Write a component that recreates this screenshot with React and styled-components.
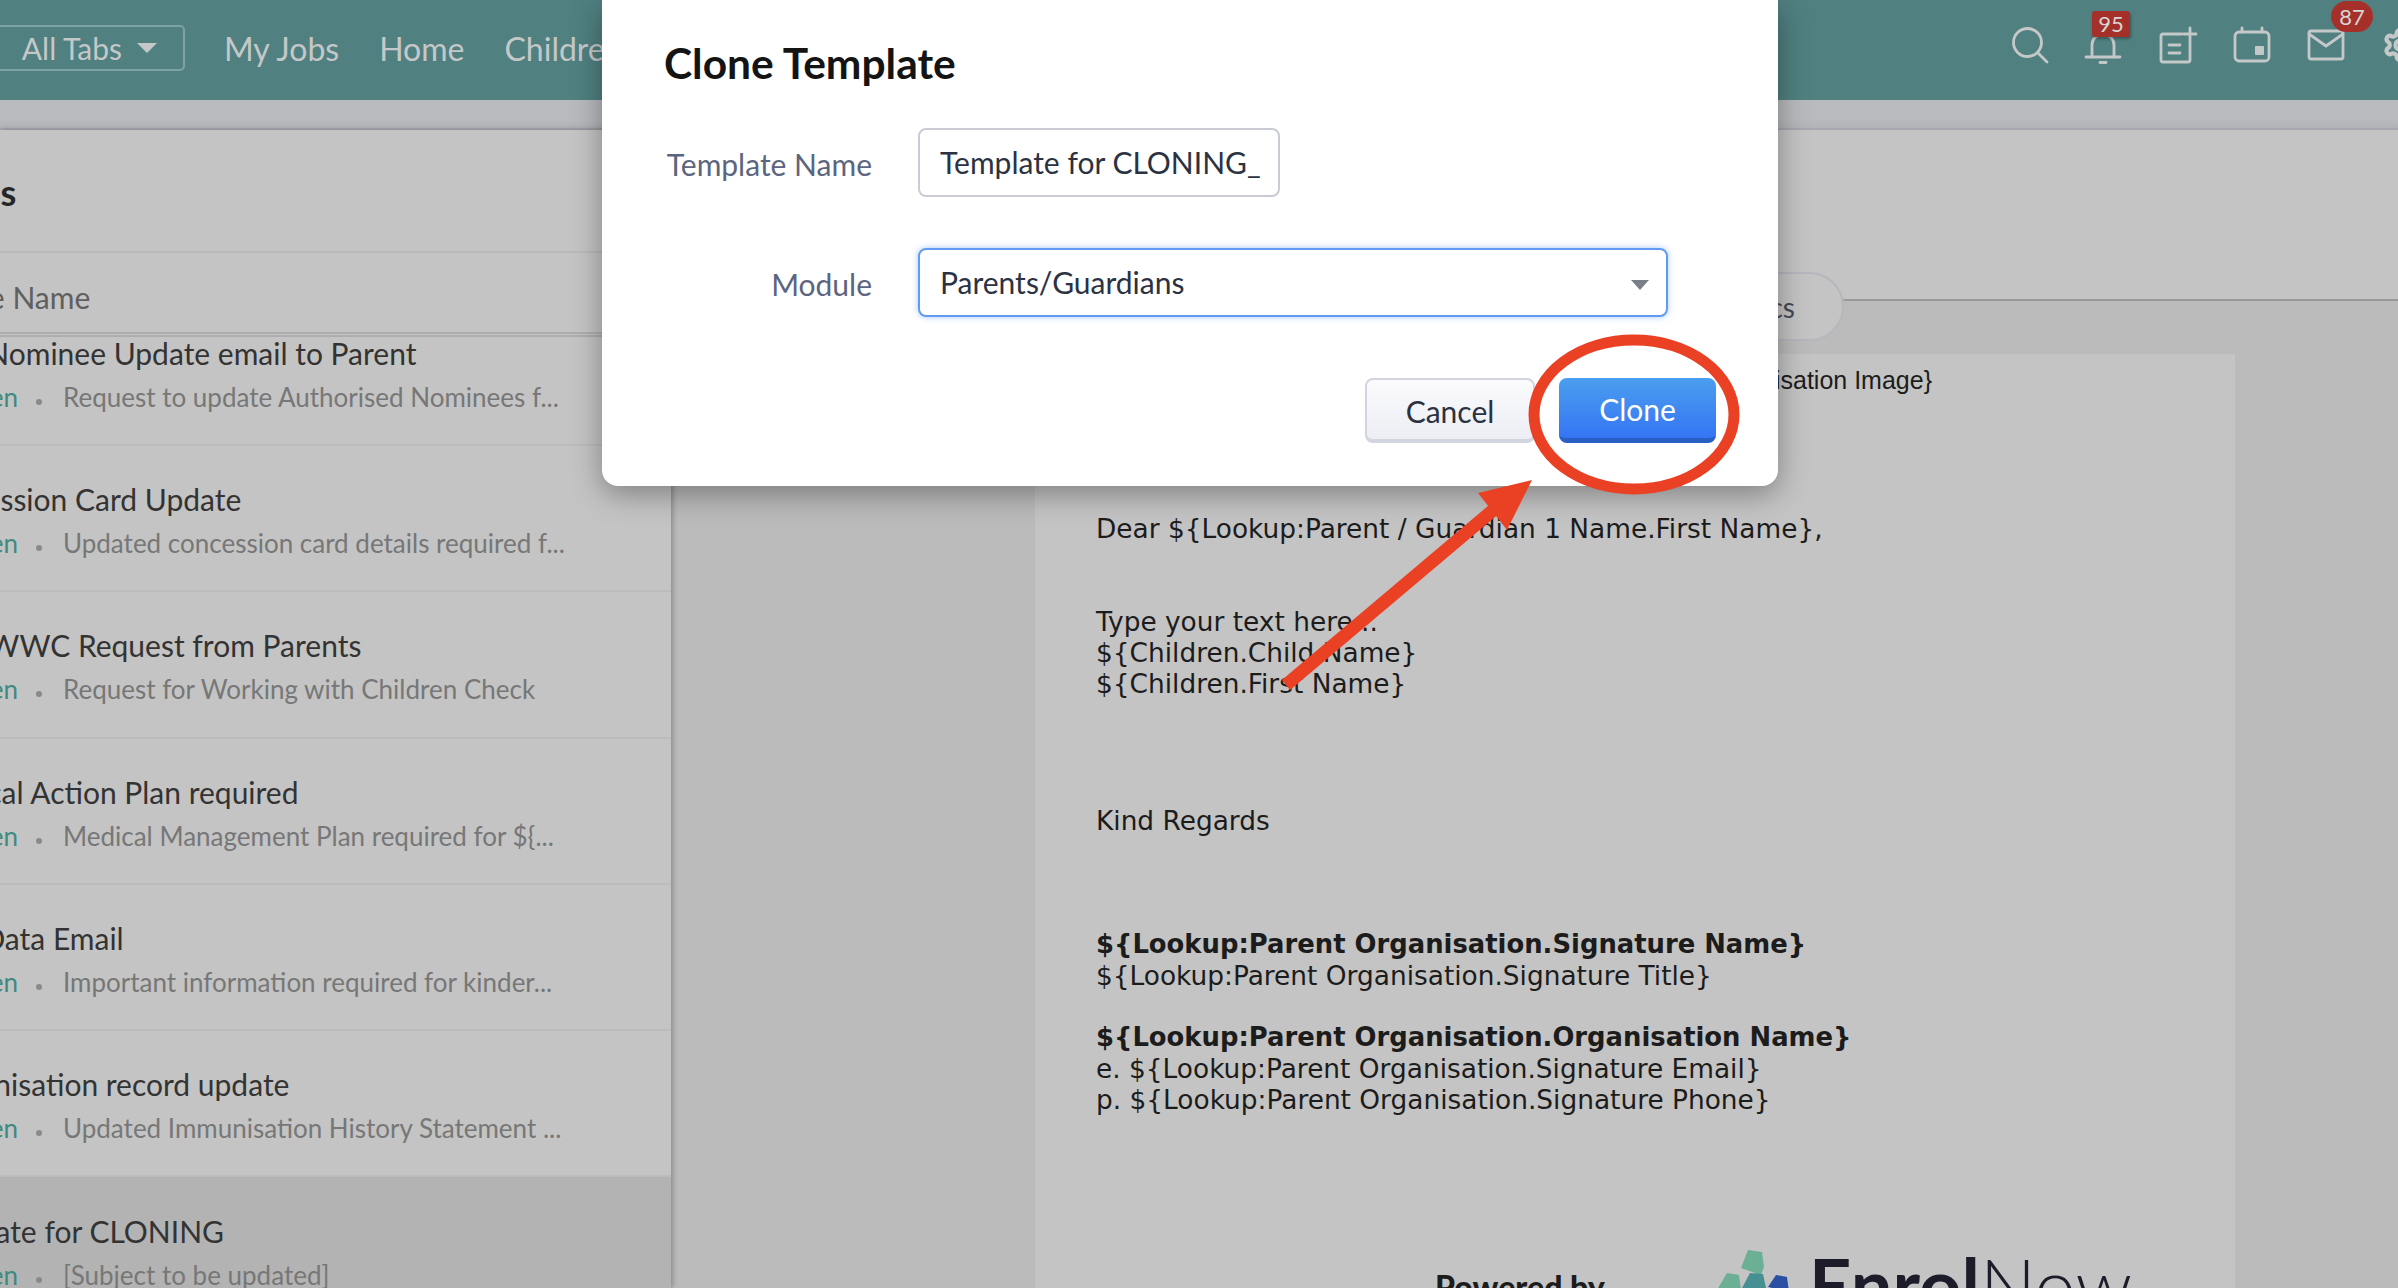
import styled, { createGlobalStyle } from "styled-components";

const GlobalStyle = createGlobalStyle`
    html, body {
        margin: 0;
        padding: 0;
        overflow: hidden;
    }
    body {
        font-family: Lato, "Liberation Sans", sans-serif;
        background: #c4c4c4;
    }
`;

const templates = [
    { title: "Add Nominee Update email to Parent", left: -75, subject: "Request to update Authorised Nominees f..." },
    { title: "Concession Card Update", left: -83, subject: "Updated concession card details required f..." },
    { title: "New WWC Request from Parents", left: -80, subject: "Request for Working with Children Check" },
    { title: "Medical Action Plan required", left: -80, subject: "Medical Management Plan required for ${..." },
    { title: "Kinder Data Email", left: -112, subject: "Important information required for kinder..." },
    { title: "Immunisation record update", left: -80, subject: "Updated Immunisation History Statement ..." },
    { title: "Template for CLONING", left: -83, subject: "[Subject to be updated]", selected: true },
];

const App = () => {
    return (
        <Page>
            <GlobalStyle />
            <TopBar>
                <TabsButton>
                    All Tabs
                    <Caret />
                </TabsButton>
                <NavLink>My Jobs</NavLink>
                <NavLink>Home</NavLink>
                <NavLink>Children</NavLink>
                <TopIcons>
                    <TopIcon>
                        <Glyph viewBox="0 0 36 36">
                            <circle cx="15.5" cy="15.5" r="14" />
                            <path d="M26 26l9 9" />
                        </Glyph>
                    </TopIcon>
                    <TopIcon>
                        <Glyph viewBox="0 0 36 36">
                            <path d="M6 30V18a11 11 0 0 1 22 0v12" />
                            <path d="M0 30h34" />
                            <path d="M14 35.500h6" />
                        </Glyph>
                        <SquareBadge>95</SquareBadge>
                    </TopIcon>
                    <TopIcon>
                        <Glyph viewBox="0 0 36 36">
                            <path d="M22 7H3a2 2 0 0 0-2 2v24a2 2 0 0 0 2 2h25a2 2 0 0 0 2-2V14" />
                            <path d="M9 18h11M9 26h11M30 1v12M24 7h12" />
                        </Glyph>
                    </TopIcon>
                    <TopIcon>
                        <Glyph viewBox="0 0 36 36">
                            <rect x="1" y="5" width="34" height="29" rx="4" />
                            <path d="M8 1v4M28 1v4" />
                            <rect x="21" y="19" width="9" height="9" rx="1" fill="#c4c8c8" stroke="none" />
                        </Glyph>
                    </TopIcon>
                    <TopIcon>
                        <Glyph viewBox="0 0 36 36">
                            <rect x="1" y="4" width="34" height="28" rx="2" />
                            <path d="M1 7l17 12 17-12" />
                        </Glyph>
                        <PillBadge>87</PillBadge>
                    </TopIcon>
                    <TopIcon>
                        <Glyph viewBox="0 0 24 24" strokeWidth="1.800">
                            <path d="M12.220 2h-.440a2 2 0 0 0-2 2v.180a2 2 0 0 1-1 1.730l-.430.250a2 2 0 0 1-2 0l-.150-.080a2 2 0 0 0-2.730.730l-.220.380a2 2 0 0 0 .730 2.730l.150.100a2 2 0 0 1 1 1.720v.510a2 2 0 0 1-1 1.740l-.150.090a2 2 0 0 0-.730 2.730l.220.380a2 2 0 0 0 2.730.730l.150-.080a2 2 0 0 1 2 0l.430.250a2 2 0 0 1 1 1.730V20a2 2 0 0 0 2 2h.440a2 2 0 0 0 2-2v-.180a2 2 0 0 1 1-1.730l.430-.250a2 2 0 0 1 2 0l.150.080a2 2 0 0 0 2.730-.730l.220-.390a2 2 0 0 0-.730-2.730l-.150-.080a2 2 0 0 1-1-1.740v-.500a2 2 0 0 1 1-1.740l.150-.090a2 2 0 0 0 .730-2.730l-.220-.380a2 2 0 0 0-2.730-.730l-.150.080a2 2 0 0 1-2 0l-.430-.250a2 2 0 0 1-1-1.730V4a2 2 0 0 0-2-2z" />
                            <circle cx="12" cy="12" r="3" />
                        </Glyph>
                    </TopIcon>
                </TopIcons>
            </TopBar>
            <SubBar />
            <Content>
                <ListPanel>
                    <PanelHeading>Templates</PanelHeading>
                    <ColumnHeader>Template Name</ColumnHeader>
                    <ListScroll>
                        {templates.map((t) => (
                            <Row key={t.title} $selected={t.selected}>
                                <RowTitle $left={t.left}>{t.title}</RowTitle>
                                <RowMeta>
                                    <ModuleName>Children</ModuleName>
                                    <Dot />
                                    <span>{t.subject}</span>
                                </RowMeta>
                            </Row>
                        ))}
                    </ListScroll>
                </ListPanel>
                <Preview>
                    <TabLine>
                        <TabPill>Statistics</TabPill>
                    </TabLine>
                    <Paper>
                        <ImageAlt>{"${Lookup:Parent Organisation.Organisation Image}"}</ImageAlt>
                        <Para $top={117}>{"Dear ${Lookup:Parent / Guardian 1 Name.First Name},"}</Para>
                        <Para $top={62}>Type your text here...</Para>
                        <Para>{"${Children.Child Name}"}</Para>
                        <Para>{"${Children.First Name}"}</Para>
                        <Para $top={106}>Kind Regards</Para>
                        <Para $top={93} $bold>{"${Lookup:Parent Organisation.Signature Name}"}</Para>
                        <Para>{"${Lookup:Parent Organisation.Signature Title}"}</Para>
                        <Para $top={31} $bold>{"${Lookup:Parent Organisation.Organisation Name}"}</Para>
                        <Para>{"e. ${Lookup:Parent Organisation.Signature Email}"}</Para>
                        <Para>{"p. ${Lookup:Parent Organisation.Signature Phone}"}</Para>
                        <PoweredRow>
                            <PoweredBy>Powered by</PoweredBy>
                            <LogoMark viewBox="0 0 74 60">
                                <path d="M31 0l14 2 2 15-6 16-3-10-14-5z" fill="#6bb094" />
                                <path d="M10 23l12 2 2 15-12 12L0 40z" fill="#6bb094" />
                                <path d="M33 23l13 1 3 14-11 12-13-12z" fill="#468f92" />
                                <path d="M59 25l11 2 2 15-21-5z" fill="#2a4fa3" />
                            </LogoMark>
                            <LogoText>Enrol<LogoLight>Now</LogoLight></LogoText>
                        </PoweredRow>
                    </Paper>
                </Preview>
            </Content>

            <Modal>
                <ModalTitle>Clone Template</ModalTitle>
                <FormRow>
                    <FieldLabel>Template Name</FieldLabel>
                    <NameInput>Template for CLONING_</NameInput>
                </FormRow>
                <FormRow $top={51}>
                    <FieldLabel>Module</FieldLabel>
                    <ModuleSelect>
                        Parents/Guardians
                        <SelectCaret />
                    </ModuleSelect>
                </FormRow>
                <ModalActions>
                    <CancelButton>Cancel</CancelButton>
                    <CloneButton>Clone</CloneButton>
                </ModalActions>
            </Modal>

            <Annotation viewBox="0 0 2398 1288">
                <ellipse cx="1634" cy="414.500" rx="100" ry="74.500" fill="none" stroke="#ea4125" strokeWidth="11" />
                <path d="M1286 685L1498 506" stroke="#ea4125" strokeWidth="13" strokeLinecap="butt" />
                <path d="M1532 480L1478 493L1507 530z" fill="#ea4125" />
            </Annotation>
        </Page>
    );
};

const Page = styled.div`
    position: relative;
    width: 2398px;
    height: 1288px;
    overflow: hidden;
    background: #c4c4c4;
`;

const TopBar = styled.header`
    display: flex;
    align-items: center;
    height: 100px;
    background: #508080;
    color: #c4c8c8;
    font-size: 32px;
    box-sizing: border-box;
    padding-bottom: 4px;
`;

const TabsButton = styled.div`
    display: flex;
    align-items: center;
    justify-content: flex-end;
    gap: 15px;
    box-sizing: border-box;
    width: 185px;
    height: 46px;
    padding-right: 26px;
    border: 2px solid #7ea3a3;
    border-left: none;
    border-radius: 0 5px 5px 0;
    margin-right: 39px;
    font-size: 30px;
`;

const Caret = styled.span`
    width: 0;
    height: 0;
    border-left: 10px solid transparent;
    border-right: 10px solid transparent;
    border-top: 10px solid #c4c8c8;
`;

const NavLink = styled.span`
    margin-right: 40px;
    white-space: nowrap;
`;

const TopIcons = styled.div`
    display: flex;
    align-items: center;
    gap: 38px;
    margin-left: auto;
    margin-right: -20px;
    margin-bottom: 6px;
`;

const TopIcon = styled.div`
    position: relative;
    width: 36px;
    height: 36px;
`;

const Glyph = styled.svg`
    display: block;
    width: 36px;
    height: 36px;
    fill: none;
    stroke: #c4c8c8;
    stroke-width: 2.800;
    stroke-linecap: round;
    stroke-linejoin: round;
    overflow: visible;
`;

const SquareBadge = styled.span`
    position: absolute;
    left: 6px;
    top: -16px;
    width: 38px;
    height: 26px;
    border-radius: 3px;
    background: #a5302a;
    box-shadow: 1px 2px 3px rgba(0, 0, 0, 0.3);
    color: #d6d6d6;
    font-size: 22px;
    line-height: 26px;
    text-align: center;
`;

const PillBadge = styled.span`
    position: absolute;
    left: 23px;
    top: -26px;
    width: 42px;
    height: 31px;
    border-radius: 16px;
    background: #a5302a;
    color: #d6d6d6;
    font-size: 22px;
    line-height: 31px;
    text-align: center;
`;

const SubBar = styled.div`
    height: 30px;
    background: linear-gradient(#b9babd 70%, #b2b3b7);
    border-bottom: 2px solid #a6a8ae;
    box-sizing: border-box;
`;

const Content = styled.main`
    display: flex;
    height: 1158px;
`;

const ListPanel = styled.section`
    display: flex;
    flex-direction: column;
    flex: 0 0 671px;
    position: relative;
    z-index: 1;
    background: #c4c4c4;
    box-shadow: 2px 0 5px rgba(0, 0, 0, 0.25);
    overflow: hidden;
`;

const PanelHeading = styled.h2`
    box-sizing: border-box;
    height: 123px;
    width: 900px;
    margin: 0 0 0 -146px;
    padding-top: 39px;
    color: #262626;
    font-size: 36px;
    font-weight: 700;
    line-height: 46px;
    border-bottom: 2px solid #b9b9b9;
`;

const ColumnHeader = styled.div`
    box-sizing: border-box;
    height: 84px;
    width: 800px;
    margin-left: -115px;
    padding-top: 25px;
    color: #5f5f5f;
    font-size: 30px;
    line-height: 38px;
    border-bottom: 5px double #adadad;
`;

const ListScroll = styled.div`
    flex: 1;
    overflow: hidden;
`;

const Row = styled.div`
    box-sizing: border-box;
    height: 146.250px;
    padding-top: ${(p) => (p.$selected ? "35px" : "34px")};
    background: ${(p) => (p.$selected ? "#b3b3b3" : "transparent")};
    border-bottom: 2px solid ${(p) => (p.$selected ? "transparent" : "#bcbcbc")};

    &:first-child {
        height: 112px;
        margin-top: -3px;
        padding-top: 0;
    }
`;

const RowTitle = styled.div`
    margin-left: ${(p) => p.$left}px;
    color: #333;
    font-size: 30px;
    line-height: 38px;
    white-space: nowrap;
`;

const RowMeta = styled.div`
    display: flex;
    align-items: center;
    margin-top: 7px;
    color: #777;
    font-size: 26px;
    line-height: 36px;
    white-space: nowrap;
`;

const ModuleName = styled.span`
    box-sizing: border-box;
    flex: 0 0 auto;
    width: 100px;
    margin-left: -82px;
    color: #3e8a80;
    text-align: right;
`;

const Dot = styled.span`
    flex: 0 0 auto;
    width: 6px;
    height: 6px;
    margin: 10px 21px 0 18px;
    border-radius: 50%;
    background: #8a8a8a;
`;

const Preview = styled.section`
    flex: 1;
    display: flex;
    flex-direction: column;
    background: #bbb;
    overflow: hidden;
`;

const TabLine = styled.div`
    display: flex;
    flex: 0 0 224px;
    justify-content: flex-end;
    padding-right: 554px;
    box-sizing: border-box;
    background: linear-gradient(#c4c4c4 169px, #999 169px, #999 171px, #bbb 171px);
`;

const TabPill = styled.div`
    box-sizing: border-box;
    height: 69px;
    margin-top: 142px;
    padding: 0 47px 0 30px;
    border: 2px solid #b6b7bd;
    border-radius: 35px;
    background: #c4c4c4;
    color: #454a58;
    font-size: 28px;
    line-height: 66px;
`;

const Paper = styled.article`
    box-sizing: border-box;
    flex: 1 0 auto;
    width: 1200px;
    margin-left: 364px;
    padding: 0 0 0 61px;
    background: #c4c4c4;
    color: #1c1c1c;
    font-family: "DejaVu Sans", sans-serif;
    font-size: 26.4px;
    line-height: 31px;
`;

const ImageAlt = styled.div`
    padding-top: 11px;
    padding-right: 303px;
    height: 31px;
    text-align: right;
    white-space: nowrap;
    font-family: "Liberation Sans", sans-serif;
    font-size: 25px;
`;

const Para = styled.p`
    margin: ${(p) => p.$top || 0}px 0 0;
    font-size: ${(p) => (p.$bold ? "25.85px" : "inherit")};
    font-weight: ${(p) => (p.$bold ? 700 : 400)};
    white-space: nowrap;
`;

const PoweredRow = styled.div`
    display: flex;
    align-items: flex-start;
    margin-top: 128px;
`;

const PoweredBy = styled.div`
    margin: 28px 0 0 339px;
    width: 282px;
    color: #1c1c1c;
    font-family: Lato, sans-serif;
    font-size: 32px;
    font-weight: 900;
`;

const LogoMark = styled.svg`
    flex: 0 0 auto;
    width: 74px;
    height: 60px;
    margin-top: 7px;
`;

const LogoText = styled.div`
    margin: -2px 0 0 18px;
    color: #1c1c2a;
    font-family: Lato, sans-serif;
    font-size: 74px;
    font-weight: 700;
    line-height: 88px;
`;

const LogoLight = styled.span`
    font-weight: 300;
`;

const Modal = styled.div`
    position: absolute;
    z-index: 2;
    left: 602px;
    top: 0;
    box-sizing: border-box;
    width: 1176px;
    height: 486px;
    padding: 38px 62px 0 62px;
    border-radius: 0 0 16px 16px;
    background: #fff;
    box-shadow: 0 8px 30px rgba(0, 0, 0, 0.35);
`;

const ModalTitle = styled.h1`
    margin: 0 0 40px;
    color: #141414;
    font-size: 42.5px;
    font-weight: 700;
    line-height: 50px;
`;

const FormRow = styled.div`
    display: flex;
    align-items: center;
    gap: 46px;
    margin-top: ${(p) => p.$top || 0}px;
`;

const FieldLabel = styled.label`
    width: 208px;
    padding-top: 3px;
    color: #5b6580;
    font-size: 30px;
    text-align: right;
    white-space: nowrap;
`;

const NameInput = styled.div`
    box-sizing: border-box;
    width: 362px;
    height: 69px;
    padding: 0 20px;
    border: 2px solid #c9ccd4;
    border-radius: 8px;
    color: #2b3242;
    font-size: 30px;
    line-height: 65px;
    white-space: nowrap;
    overflow: hidden;
`;

const ModuleSelect = styled.div`
    position: relative;
    box-sizing: border-box;
    width: 750px;
    height: 69px;
    padding: 0 20px;
    border: 2px solid #5f9bf0;
    border-radius: 8px;
    box-shadow: 0 0 6px rgba(95, 155, 240, 0.55);
    color: #2b3242;
    font-size: 30px;
    line-height: 65px;
`;

const SelectCaret = styled.span`
    position: absolute;
    right: 17px;
    top: 30px;
    width: 0;
    height: 0;
    border-left: 9px solid transparent;
    border-right: 9px solid transparent;
    border-top: 10px solid #7b7f88;
`;

const ModalActions = styled.div`
    display: flex;
    justify-content: flex-end;
    gap: 24px;
    margin-top: 61px;
`;

const ActionButton = styled.div`
    box-sizing: border-box;
    height: 65px;
    border-radius: 8px;
    font-size: 30px;
    line-height: 62px;
    text-align: center;
`;

const CancelButton = styled(ActionButton)`
    width: 170px;
    border: 2px solid #d2d5de;
    border-bottom-width: 4px;
    background: linear-gradient(#fbfbfd, #eceef4);
    color: #2b3242;
`;

const CloneButton = styled(ActionButton)`
    width: 157px;
    border-bottom: 5px solid #2a5fc4;
    background: linear-gradient(#4a9eee, #3575f5);
    color: #fff;
`;

const Annotation = styled.svg`
    position: absolute;
    z-index: 3;
    left: 0;
    top: 0;
    width: 2398px;
    height: 1288px;
    pointer-events: none;
`;

export default App;
